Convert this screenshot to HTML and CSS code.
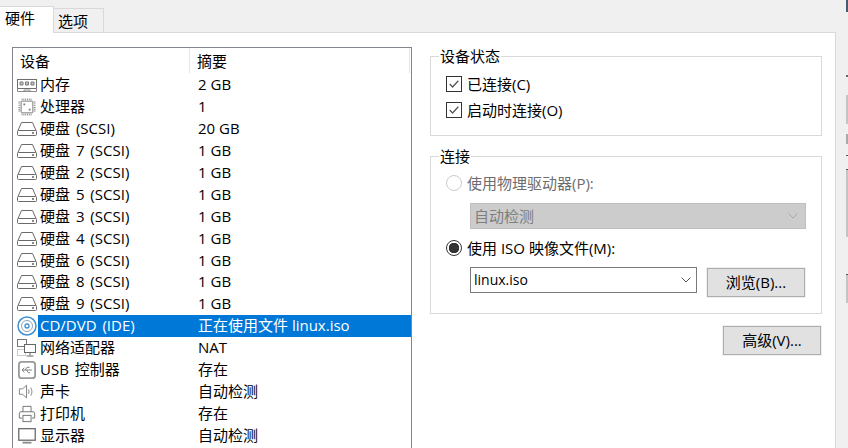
FILE: index.html
```html
<!DOCTYPE html>
<html lang="zh-CN">
<head>
<meta charset="utf-8">
<title>虚拟机设置</title>
<link rel="stylesheet" href="styles.css">
</head>
<body>
<svg class="defs" width="0" height="0" aria-hidden="true">
  <symbol id="i-mem" viewBox="0 0 20 16">
    <rect x="0.5" y="2.5" width="19" height="9" fill="none" stroke="#6e6e6e"/>
    <path d="M0.5 11.5v3h19v-3M7 14.500v-1.500h6v1.500" fill="none" stroke="#8c8c8c"/>
    <path d="M3 5h3v3h-3zM8.500 5h3v3h-3zM14 5h3v3h-3z" fill="#c8c8c8" stroke="#777" stroke-width="1"/>
  </symbol>
  <symbol id="i-cpu" viewBox="0 0 20 20">
    <rect x="3.500" y="3.500" width="13" height="13" rx="1" fill="none" stroke="#707070"/>
    <path d="M4 1.500h12M4 18.500h12M1.500 4v12M18.500 4v12" fill="none" stroke="#8a8a8a" stroke-width="2" stroke-dasharray="1 1"/>
    <path d="M6 6h2v2h-2zM12 12h2v2h-2z" fill="#777"/>
  </symbol>
  <symbol id="i-disk" viewBox="0 0 20 16">
    <path d="M1 9.500 4.500 1.500h11l3.500 8" fill="none" stroke="#6a6a6a"/>
    <rect x="0.500" y="9.500" width="19" height="5" rx="1" fill="none" stroke="#6a6a6a"/>
    <rect x="15" y="11" width="2" height="2" fill="#8a8a8a"/>
  </symbol>
  <symbol id="i-cd" viewBox="0 0 20 20">
    <circle cx="10" cy="10" r="9" fill="#fff" stroke="#3f8fd0" stroke-width="1.500"/>
    <circle cx="10" cy="10" r="5.500" fill="none" stroke="#8fa4b5"/>
    <circle cx="10" cy="10" r="2" fill="none" stroke="#3f8fd0" stroke-width="1.300"/>
  </symbol>
  <symbol id="i-net" viewBox="0 0 20 20">
    <rect x="0.500" y="1.500" width="9" height="7" fill="none" stroke="#777"/>
    <path d="M0.500 11.500h8v6h-8z" fill="none" stroke="#999" stroke-dasharray="1 1"/>
    <rect x="7.500" y="6.500" width="11" height="8" fill="#fff" stroke="#666"/>
    <path d="M13 14.500v3M9.500 18h7" fill="none" stroke="#666"/>
  </symbol>
  <symbol id="i-usb" viewBox="0 0 20 20">
    <rect x="1" y="1" width="18" height="18" rx="3" fill="none" stroke="#999" stroke-width="2"/>
    <path d="M4.500 10h11M4.500 10l2.500-2.500M4.500 10l2.500 2.500M8 10l2-3h3M9.500 10l2 3h2" fill="none" stroke="#777"/>
  </symbol>
  <symbol id="i-spk" viewBox="0 0 20 20">
    <path d="M1.500 6.500h3.500l4.500-4v14l-4.500-4h-3.500z" fill="none" stroke="#777"/>
    <path d="M11.500 7c1 1.500 1 3.500 0 5M14 5c2 2.500 2 6.500 0 9" fill="none" stroke="#a0a0a0" stroke-width="1.300"/>
  </symbol>
  <symbol id="i-prn" viewBox="0 0 20 20">
    <path d="M5.500 7.500v-6h9v6" fill="none" stroke="#6a6a6a"/>
    <path d="M4.500 14.500h-3v-5.500l1-1.500h15l1 1.500v5.500h-3" fill="none" stroke="#6a6a6a"/>
    <rect x="5.500" y="11.500" width="9" height="7" fill="none" stroke="#6a6a6a"/>
  </symbol>
  <symbol id="i-mon" viewBox="0 0 20 18">
    <rect x="0.750" y="0.750" width="18.500" height="13" fill="none" stroke="#6e6e6e" stroke-width="1.500"/>
    <path d="M5 16.500h10" stroke="#8a8a8a" stroke-width="2"/>
  </symbol>
</svg>

<nav class="tabs">
  <div class="tab tab-active">硬件</div>
  <div class="tab">选项</div>
</nav>

<main class="panel">
  <section class="list">
    <div class="list-head">
      <div class="head-name">设备</div>
      <div class="head-value">摘要</div>
    </div>
    <div class="row"><span class="ico"><svg class="i-20" viewBox="0 0 20 16"><use href="#i-mem"/></svg></span><div class="cells"><span class="name">内存</span><span class="value">2 GB</span></div></div>
    <div class="row"><span class="ico"><svg class="i-18" viewBox="0 0 20 20"><use href="#i-cpu"/></svg></span><div class="cells"><span class="name">处理器</span><span class="value">1</span></div></div>
    <div class="row"><span class="ico"><svg class="i-20" viewBox="0 0 20 16"><use href="#i-disk"/></svg></span><div class="cells"><span class="name">硬盘 (SCSI)</span><span class="value">20 GB</span></div></div>
    <div class="row"><span class="ico"><svg class="i-20" viewBox="0 0 20 16"><use href="#i-disk"/></svg></span><div class="cells"><span class="name">硬盘 7 (SCSI)</span><span class="value">1 GB</span></div></div>
    <div class="row"><span class="ico"><svg class="i-20" viewBox="0 0 20 16"><use href="#i-disk"/></svg></span><div class="cells"><span class="name">硬盘 2 (SCSI)</span><span class="value">1 GB</span></div></div>
    <div class="row"><span class="ico"><svg class="i-20" viewBox="0 0 20 16"><use href="#i-disk"/></svg></span><div class="cells"><span class="name">硬盘 5 (SCSI)</span><span class="value">1 GB</span></div></div>
    <div class="row"><span class="ico"><svg class="i-20" viewBox="0 0 20 16"><use href="#i-disk"/></svg></span><div class="cells"><span class="name">硬盘 3 (SCSI)</span><span class="value">1 GB</span></div></div>
    <div class="row"><span class="ico"><svg class="i-20" viewBox="0 0 20 16"><use href="#i-disk"/></svg></span><div class="cells"><span class="name">硬盘 4 (SCSI)</span><span class="value">1 GB</span></div></div>
    <div class="row"><span class="ico"><svg class="i-20" viewBox="0 0 20 16"><use href="#i-disk"/></svg></span><div class="cells"><span class="name">硬盘 6 (SCSI)</span><span class="value">1 GB</span></div></div>
    <div class="row"><span class="ico"><svg class="i-20" viewBox="0 0 20 16"><use href="#i-disk"/></svg></span><div class="cells"><span class="name">硬盘 8 (SCSI)</span><span class="value">1 GB</span></div></div>
    <div class="row"><span class="ico"><svg class="i-20" viewBox="0 0 20 16"><use href="#i-disk"/></svg></span><div class="cells"><span class="name">硬盘 9 (SCSI)</span><span class="value">1 GB</span></div></div>
    <div class="row row-selected"><span class="ico"><svg class="i-20b" viewBox="0 0 20 20"><use href="#i-cd"/></svg></span><div class="cells"><span class="name">CD/DVD (IDE)</span><span class="value">正在使用文件 linux.iso</span></div></div>
    <div class="row"><span class="ico"><svg class="i-20b" viewBox="0 0 20 20"><use href="#i-net"/></svg></span><div class="cells"><span class="name">网络适配器</span><span class="value">NAT</span></div></div>
    <div class="row"><span class="ico"><svg class="i-18" viewBox="0 0 20 20"><use href="#i-usb"/></svg></span><div class="cells"><span class="name">USB 控制器</span><span class="value">存在</span></div></div>
    <div class="row"><span class="ico"><svg class="i-18" viewBox="0 0 20 20"><use href="#i-spk"/></svg></span><div class="cells"><span class="name">声卡</span><span class="value">自动检测</span></div></div>
    <div class="row"><span class="ico"><svg class="i-18" viewBox="0 0 20 20"><use href="#i-prn"/></svg></span><div class="cells"><span class="name">打印机</span><span class="value">存在</span></div></div>
    <div class="row"><span class="ico"><svg class="i-20" viewBox="0 0 20 18"><use href="#i-mon"/></svg></span><div class="cells"><span class="name">显示器</span><span class="value">自动检测</span></div></div>
  </section>

  <section class="side">
    <fieldset class="group group-status">
      <legend>设备状态</legend>
      <label class="opt"><span class="box"><svg viewBox="0 0 13 13"><path d="M2.500 6.500 5.200 9.300 10.500 3.500" fill="none" stroke="#555" stroke-width="1.200"/></svg></span>已连接(C)</label>
      <label class="opt"><span class="box"><svg viewBox="0 0 13 13"><path d="M2.500 6.500 5.200 9.300 10.500 3.500" fill="none" stroke="#555" stroke-width="1.200"/></svg></span>启动时连接(O)</label>
    </fieldset>

    <fieldset class="group group-conn">
      <legend>连接</legend>
      <label class="opt opt-off"><span class="radio"></span>使用物理驱动器(P):</label>
      <div class="select-off"><span>自动检测</span><svg class="chev" viewBox="0 0 10 6"><path d="M0.500 0.500 5 5 9.500 0.500" fill="none" stroke="#a8a8a8"/></svg></div>
      <label class="opt opt-iso"><span class="radio radio-on"></span>使用 ISO 映像文件(M):</label>
      <div class="iso-row">
        <div class="combo"><span>linux.iso</span><svg class="chev" viewBox="0 0 10 6"><path d="M0.500 0.500 5 5 9.500 0.500" fill="none" stroke="#555"/></svg></div>
        <div class="btn">浏览(B)...</div>
      </div>
    </fieldset>

    <div class="adv-row"><div class="btn">高级(V)...</div></div>
  </section>
</main>

<aside class="edge">
  <i class="e1"></i><i class="e2"></i><i class="e3"></i><i class="e4"></i><i class="e5"></i><i class="e6"></i><i class="e7"></i>
</aside>
</body>
</html>
```
FILE: styles.css
```css
* { box-sizing: border-box; }
html, body { margin: 0; height: 448px; overflow: hidden; }
body {
  width: 848px;
  background: #f0f0f0;
  color: #000;
  font: 15px/20px "Open Sans", "Noto Sans CJK SC", sans-serif;
  display: grid;
  grid-template-columns: 836px 1fr;
  grid-template-rows: 33px 1fr;
}
.defs { position: absolute; }

.tabs { grid-column: 1; grid-row: 1; display: flex; align-items: flex-end; border-bottom: 1px solid #d9d9d9; }
.tab {
  width: 50px; height: 24px; margin-bottom: 0;
  border: 1px solid #d9d9d9; border-bottom: 0; border-left: 0;
  padding-left: 4px; line-height: 24px;
}
.tab-active {
  width: 54px; height: 27px; margin-bottom: -1px;
  background: #fff; padding-left: 5px; line-height: 22px;
}

.panel {
  grid-column: 1; grid-row: 2;
  background: #fff;
  border-right: 1px solid #d9d9d9;
  display: grid;
  grid-template-columns: 400px 392px;
  column-gap: 18px;
  padding: 14px 0 0 12px;
  min-height: 0;
  overflow: hidden;
}

.list { border: 1px solid #82878f; border-bottom: 0; height: 420px; overflow: hidden; }
.list-head { display: flex; height: 26px; line-height: 26px; margin-bottom: 0; }
.head-name { width: 177px; padding-left: 7px; border-right: 1px solid #e5e5e5; height: 25px; }
.head-value { width: 220px; padding-left: 7px; border-right: 1px solid #e5e5e5; height: 25px; }
.row { display: flex; height: 21.94px; line-height: 21.94px; }
.ico { width: 25px; flex: none; display: flex; align-items: center; padding-left: 4px; }
.ico svg { display: block; flex: none; }
.i-20 { width: 20px; height: 16px; }
.i-20b { width: 20px; height: 20px; }
.i-18 { width: 18px; height: 18px; margin-left: 1px; }
.cells { flex: 1; display: flex; }
.name { width: 160px; padding-left: 2px; white-space: nowrap; word-spacing: 2px; }
.value { white-space: nowrap; }
.row-selected .cells { background: #0078d7; color: #fff; }

.side { padding-top: 0; }
.group { margin: 0; padding: 0; border: 1px solid #d9d9d9; min-width: 0; }
.group legend { margin-left: -7px; padding: 0 1px; line-height: 20px; }
.group-status { height: 90px; padding: 5px 0 0 15px; margin-top: -1px; }
.group-conn { height: 168px; margin-top: 10px; padding: 5px 0 0 15px; }

.opt { display: flex; align-items: center; height: 26px; }
.box {
  width: 16px; height: 16px; margin-right: 5px;
  border: 1px solid #333; display: block; background: #fff;
}
.box svg { display: block; width: 14px; height: 14px; }
.radio {
  width: 16px; height: 16px; margin-right: 5px; border-radius: 50%;
  border: 1px solid #ccc; background: #fff; display: block; flex: none;
}
.radio-on {
  border-color: #333;
  background: radial-gradient(circle, #333 0 5px, #fff 5.500px);
}
.opt-off { color: #6d6d6d; height: 24px; }
.select-off {
  margin: 8px 0 0 24px; width: 336px; height: 26px;
  background: #ccc; border: 1px solid #bfbfbf; color: #7e7e7e;
  display: flex; align-items: center; justify-content: space-between;
  padding: 0 7px 0 3px;
}
.opt-iso { margin-top: 6px; }
.chev { width: 10px; height: 6px; display: block; }
.iso-row { display: flex; align-items: flex-start; margin: 6px 0 0 24px; }
.combo {
  width: 227px; height: 26px; border: 1px solid #7a7a7a; background: #fff;
  display: flex; align-items: center; justify-content: space-between; padding: 0 5px 0 3px;
  font-size: 14px;
}
.btn {
  width: 98px; height: 29px; line-height: 27px; text-align: center;
  background: #e1e1e1; border: 1px solid #adadad;
  box-shadow: 0 0 0 1px #f0f0f0;
}
.iso-row .btn { margin: 1px 0 0 10px; }
.adv-row { display: flex; justify-content: flex-end; margin: 12px 1px 0 0; }

.edge { grid-column: 2; grid-row: 1 / 3; position: relative; }
.edge i { position: absolute; right: 0; width: 2px; display: block; }
.e1 { top: 0; height: 12px; background: #4a5a6e; }
.e2 { top: 75px; height: 2px; background: #666; }
.e3 { top: 95px; height: 29px; background: #c4c4c4; }
.e4 { top: 134px; height: 10px; background: #aaa; }
.e5 { top: 155px; height: 1px; background: #555; }
.e6 { top: 169px; height: 68px; background: #c4c4c4; border-top: 1px solid #555; }
.e7 { top: 274px; height: 29px; background: #c4c4c4; border-top: 1px solid #555; }
```
